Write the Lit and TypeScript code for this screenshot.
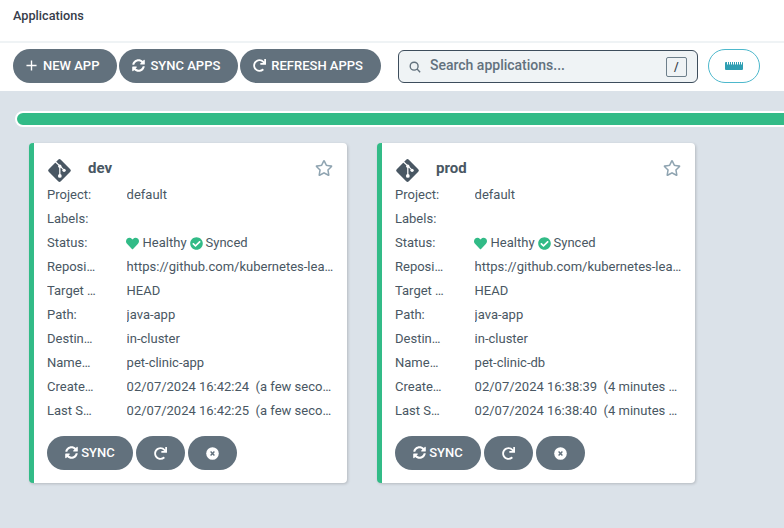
import {LitElement, html, css, svg} from 'lit';
import {customElement} from 'lit/decorators.js';

const icon = (vb: string, d: string) => html`<svg class="i" viewBox=${vb} fill="currentColor">${svg`<path d=${d}></path>`}</svg>`;

const plus = () => html`<svg class="plus" viewBox="0 0 12 12" fill="none" stroke="currentColor" stroke-width="1.5"><path d="M6 .5v11M.5 6h11"></path></svg>`;
const sync = () => icon('0 0 512 512', 'M370.72 133.28C339.458 104.008 298.888 87.962 255.848 88c-77.458.068-144.328 53.178-162.791 126.85-1.344 5.363-6.122 9.15-11.651 9.15H24.103c-7.498 0-13.194-6.807-11.807-14.176C33.933 94.924 134.813 8 256 8c66.448 0 126.791 26.136 171.315 68.685L463.03 40.97C478.149 25.851 504 36.559 504 57.941V192c0 13.255-10.745 24-24 24H345.941c-21.382 0-32.09-25.851-16.971-40.971l41.75-41.749zM32 296h134.059c21.382 0 32.09 25.851 16.971 40.971l-41.75 41.75c31.262 29.273 71.835 45.319 114.876 45.28 77.418-.07 144.315-53.144 162.787-126.849 1.344-5.363 6.122-9.15 11.651-9.15h57.304c7.498 0 13.194 6.807 11.807 14.176C478.067 417.076 377.187 504 256 504c-66.448 0-126.791-26.136-171.315-68.685L48.97 471.03C33.851 486.149 8 475.441 8 454.059V320c0-13.255 10.745-24 24-24z');
const redo = () => icon('0 0 512 512', 'M500.33 0h-47.41a12 12 0 0 0-12 12.57l4 82.76A247.42 247.42 0 0 0 256 8C119.34 8 7.9 119.53 8 256.19 8.1 393.07 119.1 504 256 504a247.1 247.1 0 0 0 166.18-63.91 12 12 0 0 0 .48-17.43l-34-34a12 12 0 0 0-16.38-.55A176 176 0 1 1 402.1 157.8l-101.53-4.87a12 12 0 0 0-12.57 12v47.41a12 12 0 0 0 12 12h200.33a12 12 0 0 0 12-12V12a12 12 0 0 0-12-12z');
const timesCircle = () => html`<svg class="i" viewBox="0 0 13 13"><circle cx="6.5" cy="6.5" r="6.3" fill="#fff"></circle><path d="M4.6 4.6l3.8 3.8M8.4 4.6l-3.8 3.8" stroke="#62717d" stroke-width="1.4" fill="none"></path></svg>`;
const heart = () => icon('0 0 512 512', 'M462.3 62.6C407.5 15.9 326 24.3 275.7 76.2L256 96.5l-19.7-20.3C186.1 24.3 104.5 15.9 49.7 62.6c-62.8 53.6-66.1 149.8-9.9 207.9l193.5 199.8c12.5 12.9 32.8 12.9 45.3 0l193.5-199.8c56.3-58.1 53-154.3-9.8-207.9z');
const check = () => icon('0 0 512 512', 'M504 256c0 136.967-111.033 248-248 248S8 392.967 8 256 119.033 8 256 8s248 111.033 248 248zM227.314 387.314l184-184c6.248-6.248 6.248-16.379 0-22.627l-22.627-22.627c-6.248-6.249-16.379-6.249-22.628 0L216 308.118l-70.059-70.059c-6.248-6.248-16.379-6.248-22.628 0l-22.627 22.627c-6.248 6.248-6.248 16.379 0 22.627l104 104c6.249 6.25 16.379 6.25 22.628.001z');
const star = () => icon('0 0 576 512', 'M528.1 171.5L382 150.2 316.7 17.8c-11.7-23.6-45.6-23.9-57.4 0L194 150.2 47.9 171.5c-26.2 3.8-36.7 36.1-17.7 54.6l105.7 103-25 145.5c-4.5 26.3 23.2 46 46.4 33.7L288 439.6l130.7 68.7c23.2 12.2 50.9-7.4 46.4-33.7l-25-145.5 105.7-103c19-18.5 8.5-50.8-17.7-54.6zM388.6 312.3l23.7 138.4L288 385.4l-124.3 65.3 23.7-138.4-100.6-98 139-20.2 62.2-126 62.2 126 139 20.2-100.6 98z');

const gitLogo = html`<svg class="git" viewBox="0 0 24 24">
  <rect x="3.8" y="3.8" width="16.4" height="16.4" rx="1.8" transform="rotate(45 12 12)" fill="#495763"></rect>
  <path d="M8 3.6L12.3 7.6M12.3 7.6V17.2M12.3 7.6L16.4 11.6" stroke="#fff" stroke-width="1.2" fill="none"></path>
  <circle cx="12.3" cy="7.8" r="1.6" fill="#fff"></circle>
  <circle cx="12.3" cy="17.2" r="1.8" fill="#fff"></circle>
  <circle cx="16.4" cy="11.8" r="1.6" fill="#fff"></circle>
</svg>`;

interface App {
  name: string;
  namespace: string;
  created: string;
  synced: string;
  ago: string;
}

const apps: App[] = [
  {name: 'dev', namespace: 'pet-clinic-app', created: '02/07/2024 16:42:24', synced: '02/07/2024 16:42:25', ago: 'a few seconds ago'},
  {name: 'prod', namespace: 'pet-clinic-db', created: '02/07/2024 16:38:39', synced: '02/07/2024 16:38:40', ago: '4 minutes ago'},
];

@customElement('app-root')
export class AppRoot extends LitElement {
  static styles = css`
    :host {
      display: flex;
      flex-direction: column;
      min-height: 100vh;
      overflow: hidden;
      background: #dbe2e9;
      font-family: Roboto, "Liberation Sans", sans-serif;
      font-size: 13px;
      color: #495763;
    }
    .i {
      height: 1em;
      width: auto;
      flex: none;
      display: block;
    }
    .title {
      height: 41px;
      box-sizing: border-box;
      background: #fff;
      padding: 8px 13px 0;
      font-size: 12.7px;
      font-weight: 500;
      line-height: 16px;
      color: #363c4a;
    }
    .toolbar {
      display: flex;
      align-items: center;
      height: 50px;
      box-sizing: border-box;
      padding: 6px 24px 8px 13px;
      background: #fff;
      border-top: 2px solid #eff3f5;
    }
    .btn {
      display: inline-flex;
      align-items: center;
      justify-content: center;
      gap: 5px;
      height: 34px;
      box-sizing: border-box;
      padding: 0 18px 2px 13px;
      border-radius: 17px;
      background: #62717d;
      color: #fff;
      font-size: 13px;
      font-weight: 500;
      white-space: nowrap;
    }
    .toolbar .btn + .btn {
      margin-left: 2px;
    }
    .toolbar .btn.new {
      gap: 6px;
    }
    .plus {
      width: 11px;
      height: 11px;
      flex: none;
    }
    .search {
      display: flex;
      align-items: center;
      width: 300px;
      height: 33px;
      box-sizing: border-box;
      margin: 1px 0 0 17px;
      padding: 0 10px;
      background: #eff3f5;
      border: 1px solid #3d4d5c;
      border-radius: 6px;
      color: #62717d;
      font-size: 14px;
      font-weight: 500;
    }
    .search svg {
      width: 12px;
      height: 14px;
      margin-right: 9px;
    }
    .search span {
      flex: 1;
      padding-bottom: 3px;
    }
    .search kbd {
      width: 21px;
      height: 20px;
      box-sizing: border-box;
      border: 1px solid #6d7f8b;
      border-radius: 2px;
      font: 500 12px/18px Roboto, sans-serif;
      color: #363c4a;
      text-align: center;
    }
    .ruler {
      display: flex;
      align-items: center;
      justify-content: center;
      width: 52px;
      height: 34px;
      box-sizing: border-box;
      margin-left: 10px;
      border: 1px solid #4db8cc;
      border-radius: 17px;
      background: #fff;
    }
    .content {
      flex: 1;
      padding: 20px 0 0 15px;
    }
    .progress {
      height: 16px;
      width: 790px;
      box-sizing: border-box;
      border: 2px solid #fff;
      border-radius: 8px;
      background: #32bb87;
    }
    .cards {
      display: flex;
      gap: 30px;
      padding: 16px 0 0 14px;
    }
    .card {
      width: 318px;
      height: 340px;
      box-sizing: border-box;
      padding: 0 10px 0 13px;
      background: #fff;
      border-left: 5px solid #32bb87;
      border-radius: 4px;
      box-shadow: 1px 1px 3px rgba(0, 0, 0, 0.18);
    }
    .head {
      display: flex;
      align-items: center;
      height: 40px;
      padding: 10px 4px 0 0;
      box-sizing: border-box;
    }
    .git {
      width: 25px;
      height: 25px;
      flex: none;
      margin: 4px 16.5px 0 -0.5px;
    }
    .name {
      flex: 1;
      font-size: 15px;
      font-weight: 700;
      color: #495763;
    }
    .star {
      font-size: 16px;
      color: #8fa4b1;
    }
    .row {
      display: grid;
      grid-template-columns: 79.6px 208px;
      height: 24px;
      line-height: 24px;
    }
    .row > div {
      white-space: pre;
      overflow: hidden;
      text-overflow: ellipsis;
    }
    .label {
      width: 50px;
    }
    .status {
      display: flex;
      align-items: center;
      gap: 3px;
      margin-left: -0.5px;
    }
    .status .i {
      color: #32bb87;
    }
    .status .i:first-child {
      margin-right: 0.5px;
    }
    .actions {
      display: flex;
      gap: 3px;
      margin-top: 13px;
    }
    .actions .btn {
      width: 49px;
      padding: 0;
    }
    .actions .btn.sync {
      width: 86px;
      gap: 3px;
      padding-bottom: 2px;
    }
  `;

  renderCard(a: App) {
    const row = (label: string, value: string) => html`
      <div class="row"><div class="label">${label}</div><div>${value}</div></div>`;
    return html`
      <div class="card">
        <div class="head">
          ${gitLogo}
          <div class="name">${a.name}</div>
          <span class="star">${star()}</span>
        </div>
        ${row('Project:', 'default')}
        ${row('Labels:', '')}
        <div class="row">
          <div class="label">Status:</div>
          <div class="status">${heart()}<span>Healthy</span>${check()}<span>Synced</span></div>
        </div>
        ${row('Repository:', 'https://github.com/kubernetes-learning/app')}
        ${row('Target Revision:', 'HEAD')}
        ${row('Path:', 'java-app')}
        ${row('Destination:', 'in-cluster')}
        ${row('Namespace:', a.namespace)}
        ${row('Created At:', `${a.created}  (${a.ago})`)}
        ${row('Last Sync:', `${a.synced}  (${a.ago})`)}
        <div class="actions">
          <div class="btn sync">${sync()}SYNC</div>
          <div class="btn">${redo()}</div>
          <div class="btn">${timesCircle()}</div>
        </div>
      </div>`;
  }

  override render() {
    return html`
      <div class="title">Applications</div>
      <div class="toolbar">
        <div class="btn new">${plus()}NEW APP</div>
        <div class="btn">${sync()}SYNC APPS</div>
        <div class="btn">${redo()}REFRESH APPS</div>
        <div class="search">
          <svg viewBox="0 0 14 16" fill="none" stroke="currentColor" stroke-width="1.6"><circle cx="6" cy="7" r="4.6"></circle><path d="M9.4 10.4L13 14"></path></svg>
          <span>Search applications...</span>
          <kbd>/</kbd>
        </div>
        <div class="ruler">
          <svg width="18" height="8" viewBox="0 0 36 16" fill="#2f9fb3"><path d="M2 0h2v5h2V0h2v5h2V0h2v5h2V0h2v5h2V0h2v5h2V0h2v5h2V0h2v5h2V0h2v5h2V0a2 2 0 0 1 2 2v12a2 2 0 0 1-2 2H2a2 2 0 0 1-2-2V2a2 2 0 0 1 2-2z"></path></svg>
        </div>
      </div>
      <div class="content">
        <div class="progress"></div>
        <div class="cards">${apps.map((a) => this.renderCard(a))}</div>
      </div>
    `;
  }
}
